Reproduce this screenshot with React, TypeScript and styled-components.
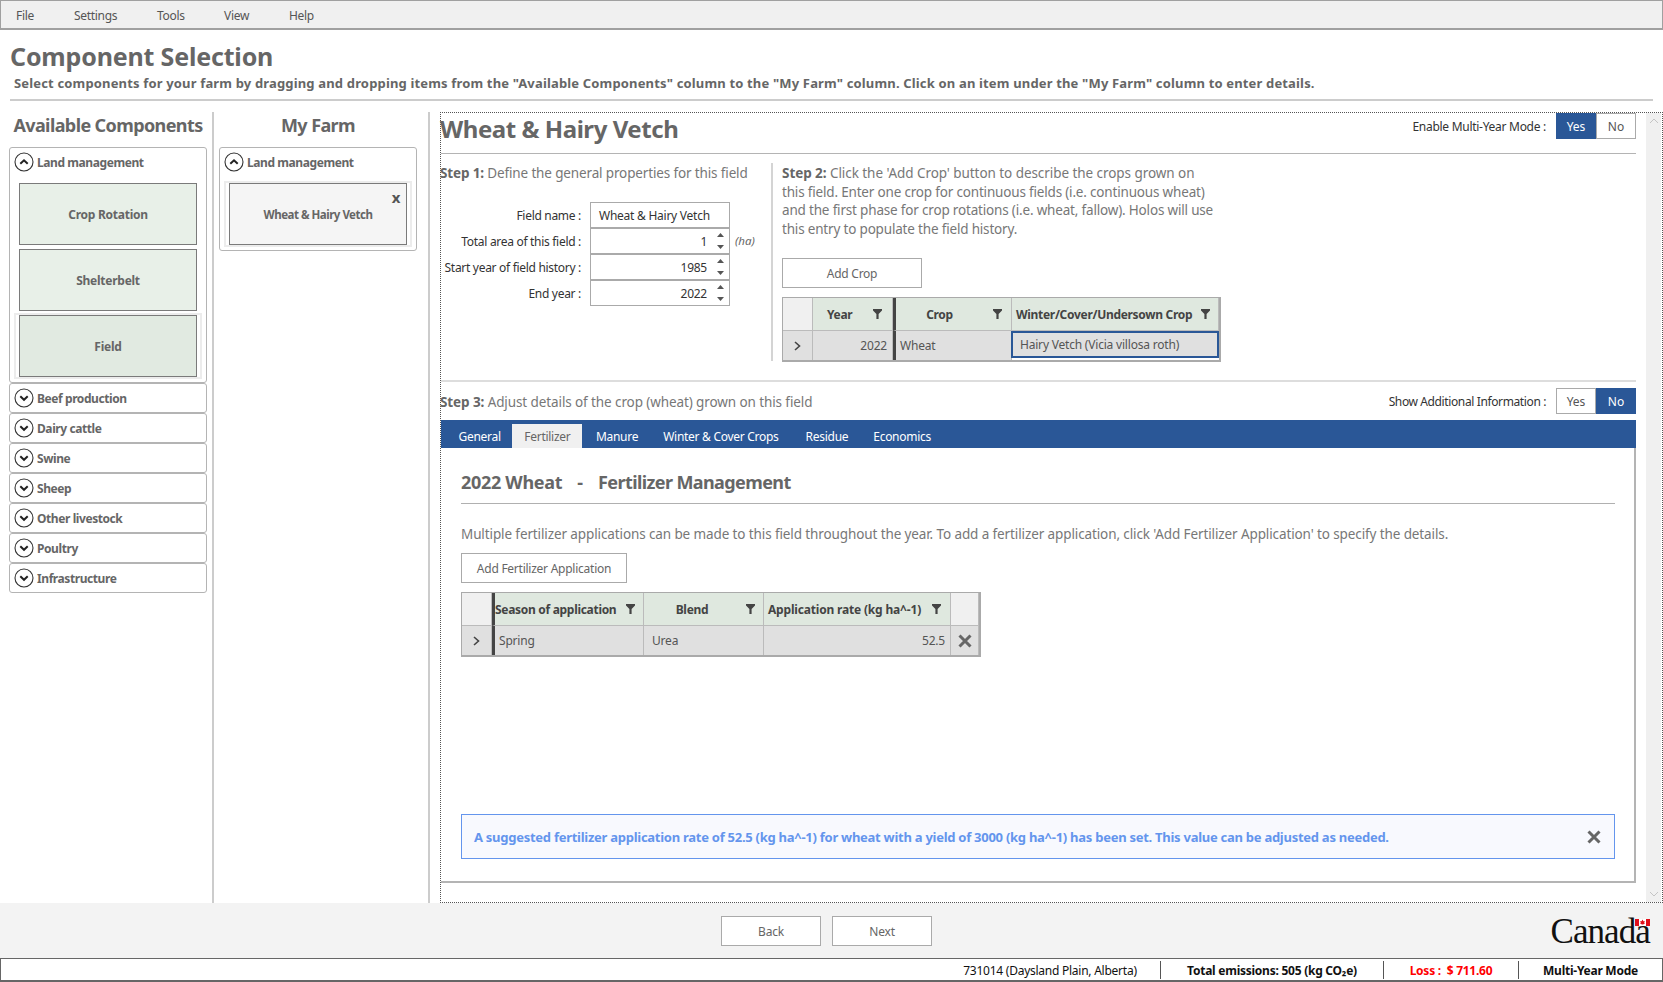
import React from "react";
import styled, { createGlobalStyle } from "styled-components";

const Global = createGlobalStyle`
  html, body { margin: 0; padding: 0; background: #fff; }
  * { box-sizing: border-box; }
  body { font-family: "Noto Sans", "Open Sans", sans-serif; color: #666; overflow: hidden; }
`;

const Page = styled.div`
  width: 1663px; height: 982px; display: flex; flex-direction: column; overflow: hidden;
`;
const MenuBar = styled.div`
  height: 30px; background: #f0f0f0; border: 1px solid #a0a0a0; border-width: 1px 1px 2px 1px; padding-top: 2px;
  display: flex; align-items: center; font-size: 12px; color: #555; position: relative;
`;
const MenuItem = styled.span<{ $w: number }>`
  width: ${(p) => p.$w}px; flex: none; padding-left: 15px; letter-spacing: -0.3px;
`;
const Head = styled.header`
  height: 82px; padding: 9px 10px 0 10px; display: flex; flex-direction: column;
`;
const Title = styled.h1`
  margin: 0 0 1px 0; font-size: 25px; line-height: 34px; font-weight: 700; color: #666; letter-spacing: -0.17px;
`;
const Sub = styled.p`
  margin: 0; padding-left: 4px; font-size: 13px; line-height: 18px; font-weight: 700; color: #666; letter-spacing: 0.16px; white-space: nowrap;
`;
const HeadRule = styled.div`
  height: 2px; margin-top: 7px; width: 1643px; background: #ccc;
`;
const Body = styled.div`
  flex: 1; min-height: 0; display: flex;
`;
const SideCol = styled.aside<{ $w: number; $pl: number }>`
  width: ${(p) => p.$w}px; flex: none; padding-left: ${(p) => p.$pl}px; border-right: 2px solid #ccc;
  display: flex; flex-direction: column;
`;
const ColTitle = styled.h2<{ $w: number }>`
  margin: 0; width: ${(p) => p.$w}px; height: 35px; font-size: 18px; line-height: 26px; font-weight: 700; color: #666;
  text-align: center; letter-spacing: -0.6px; white-space: nowrap;
`;
const Accordion = styled.section`
  width: 198px; border: 1px solid #b4b4b4; border-radius: 3px; background: #fff;
`;
const AccHead = styled.div`
  height: 28px; display: flex; align-items: center; gap: 3px; padding-left: 4px;
  font-size: 12px; font-weight: 700; color: #666; letter-spacing: -0.42px;
`;
const AccBody = styled.div`
  padding: 5px 4px 3px 4px; display: flex; flex-direction: column;
`;
const Ring = styled.div<{ $on?: boolean }>`
  border: 2px solid ${(p) => (p.$on ? "#ececec" : "transparent")}; padding: 0 3px;
  height: 66px; display: flex;
`;
const Tile = styled.div<{ $bg: string; $small?: boolean }>`
  flex: 1; border: 1px solid #7a7a7a; background: ${(p) => p.$bg}; position: relative;
  display: flex; align-items: center; justify-content: center;
  font-size: ${(p) => (p.$small ? 11.5 : 12)}px; font-weight: 700; color: #666; letter-spacing: ${(p) => (p.$small ? -0.5 : -0.25)}px;
`;
const TileClose = styled.span`
  position: absolute; right: 6px; top: 5px; font-size: 15px; line-height: 16px; font-weight: 700; color: #555;
`;
const Main = styled.main`
  flex: none; width: 1223px; margin-left: 10px; border: 1px dotted #555; display: flex;
`;
const Content = styled.div`
  width: 1195px; flex: none; display: flex; flex-direction: column;
`;
const Scroll = styled.div`
  width: 15px; margin-left: 10px; flex: none; background: #f0f0f0; display: flex; flex-direction: column;
  justify-content: space-between; align-items: center; padding: 5px 0; color: #c4c4c4;
`;
const TitleRow = styled.div`
  height: 41px; flex: none; display: flex; justify-content: space-between; border-bottom: 1px solid #b4b4b4;
`;
const FieldTitle = styled.h2`
  margin: 0 0 0 -1px; font-size: 24px; line-height: 31px; font-weight: 700; color: #666; letter-spacing: -0.45px;
`;
const ToggleWrap = styled.div`
  display: flex; align-items: center; height: 26px; font-size: 12px; color: #333;
`;
const ToggleLabel = styled.span<{ $ls: number }>`
  margin-right: 10px; letter-spacing: ${(p) => p.$ls}px;
`;
const ToggleBtn = styled.span<{ $on: boolean }>`
  width: 40px; height: 26px; display: flex; align-items: center; justify-content: center; font-size: 12px;
  background: ${(p) => (p.$on ? "#2a5797" : "#fff")}; color: ${(p) => (p.$on ? "#fff" : "#555")};
  border: 1px solid ${(p) => (p.$on ? "#2a5797" : "#aaa")};
`;
const Steps = styled.div`
  height: 228px; flex: none; display: flex; padding-top: 10px; border-bottom: 2px solid #ddd;
`;
const StepOne = styled.div`
  width: 330px; flex: none;
`;
const StepText = styled.p`
  margin: 0; font-size: 13.5px; line-height: 18.67px; color: #777; letter-spacing: -0.14px; white-space: nowrap;
  b { color: #666; font-weight: 700; }
`;
const StepLead = styled(StepText)`
  margin-left: -1px;
`;
const StepLine = styled.span<{ $ls: number }>`
  display: block; letter-spacing: ${(p) => p.$ls}px;
`;
const Form = styled.div`
  margin-top: 19px; display: grid; grid-template-columns: 140px 140px auto; column-gap: 9px; grid-auto-rows: 26px;
`;
const Label = styled.label`
  align-self: center; text-align: right; font-size: 12px; color: #333; letter-spacing: -0.3px; white-space: nowrap; padding-top: 2px;
`;
const Input = styled.div<{ $num?: boolean }>`
  border: 1px solid #aaa; height: 26px; background: #fff; font-size: 12px; color: #333; letter-spacing: -0.25px;
  display: flex; align-items: center; justify-content: ${(p) => (p.$num ? "flex-end" : "flex-start")};
  padding: 1px ${(p) => (p.$num ? "5px 0 0" : "0 0 8px")}; gap: 9px;
`;
const Unit = styled.span`
  align-self: center; font-size: 11.5px; font-style: italic; color: #666; margin-left: -4px;
`;
const Spin = styled.span`
  display: flex; flex-direction: column; gap: 8px; width: 8px; align-items: center;
`;
const VLine = styled.div`
  width: 2px; height: 198px; flex: none; background: #d4d4d4; margin-top: -1px;
`;
const StepTwo = styled.div`
  flex: none; width: 460px; padding-left: 9px;
`;
const Button = styled.div<{ $w: number }>`
  width: ${(p) => p.$w}px; height: 30px; border: 1px solid #aaa; background: #fff; display: flex; align-items: center;
  justify-content: center; font-size: 12px; color: #666; letter-spacing: -0.25px;
`;
const AddCrop = styled(Button)`
  margin-top: 19.32px;
`;
const Table = styled.div<{ $cols: string; $w: number }>`
  width: ${(p) => p.$w}px; display: grid; grid-template-columns: ${(p) => p.$cols}; grid-template-rows: 33px 29px;
  border: 1px solid #aaa; border-bottom-width: 2px; border-right-width: 2px; font-size: 12px; margin-top: 9px;
`;
const Corner = styled.div`
  background: #f0f0f0; border-right: 1px solid #bbb; border-bottom: 1px solid #bbb;
`;
const RowHead = styled.div`
  background: #e0e0e0; border-right: 1px solid #bbb; display: flex; align-items: center; justify-content: center; color: #444;
`;
const HeadCell = styled.div<{ $bar?: boolean; $pad?: number; $pr?: number }>`
  background: #dfe8df; border-right: 1px solid #bbb; border-bottom: 1px solid #bbb;
  ${(p) => (p.$bar ? "border-left: 3px solid #444;" : "")}
  display: flex; align-items: center; justify-content: space-between; padding: 0 ${(p) => p.$pr ?? 8}px 0 ${(p) => p.$pad ?? 4}px;
  font-weight: 700; color: #444; letter-spacing: -0.3px; white-space: nowrap; font-size: 12px;
`;
const HeadText = styled.span<{ $off?: number; $ls?: number }>`
  ${(p) => (p.$off !== undefined ? `flex: 1; text-align: center; padding-right: ${p.$off}px;` : "")}
  ${(p) => (p.$ls !== undefined ? `letter-spacing: ${p.$ls}px;` : "")}
`;
const Cell = styled.div<{ $bar?: boolean; $right?: boolean; $pad?: number; $sel?: boolean }>`
  background: #e0e0e0; border-right: 1px solid #bbb;
  ${(p) => (p.$bar ? "border-left: 3px solid #444;" : "")}
  ${(p) => (p.$sel ? "border: 2px solid #2a5797; margin: 0 0 2px -1px;" : "")}
  display: flex; align-items: center; justify-content: ${(p) => (p.$right ? "flex-end" : "flex-start")};
  padding: 0 ${(p) => (p.$right ? 5 : 0)}px 0 ${(p) => p.$pad ?? 4}px; color: #555; letter-spacing: -0.2px; white-space: nowrap;
`;
const StepThree = styled.div`
  height: 38px; flex: none; display: flex; justify-content: space-between; align-items: flex-start; padding-top: 6px;
`;
const StepThreeText = styled(StepLead)`
  line-height: 28px; letter-spacing: -0.1px;
`;
const Tabs = styled.nav`
  height: 28px; flex: none; background: #2a5797; display: flex; align-items: flex-end; padding-left: 5px;
`;
const Tab = styled.span<{ $on?: boolean; $ml?: number }>`
  height: 24px; padding: 0 ${(p) => (p.$on ? 12 : 12.5)}px; display: flex; align-items: center; font-size: 12px; letter-spacing: -0.28px;
  margin-left: ${(p) => p.$ml ?? 0}px;
  color: ${(p) => (p.$on ? "#666" : "#fff")}; background: ${(p) => (p.$on ? "#f0f0f0" : "transparent")};
`;
const TabPanel = styled.div`
  height: 435px; flex: none; border: 1px solid #b4b4b4; border-width: 0 2px 2px 0; padding: 0 19px 0 20px;
  display: flex; flex-direction: column; position: relative;
`;
const PanelTitle = styled.h3`
  margin: 0; height: 56px; flex: none; border-bottom: 1px solid #b0b0b0; font-size: 18px; line-height: 69px; font-weight: 700; color: #666;
  display: flex; gap: 15px; white-space: nowrap;
`;
const PanelPart = styled.span<{ $ls: number }>`
  letter-spacing: ${(p) => p.$ls}px;
`;
const Para = styled.p`
  margin: 21px 0 0 0; font-size: 13.5px; line-height: 18px; color: #777; letter-spacing: -0.11px; white-space: nowrap;
`;
const AddFert = styled(Button)`
  margin-top: 10px;
`;
const Alert = styled.div`
  position: absolute; left: 20px; right: 19px; bottom: 22px; height: 45px; border: 1px solid #6495ed; background: #f8f9fe;
  color: #6495ed; font-size: 13px; font-weight: 700; letter-spacing: -0.265px; display: flex; align-items: center;
  justify-content: space-between; padding: 0 13px 0 12px;
`;
const Foot = styled.footer`
  height: 55px; flex: none; background: #f3f3f3; display: flex; justify-content: center; align-items: flex-start;
  padding: 13px 10px 0 0; gap: 11px; position: relative;
`;
const FootBtn = styled.div`
  width: 100px; height: 30px; border: 1px solid #aaa; background: #fff; display: flex; align-items: center; justify-content: center;
  font-size: 12px; color: #666; letter-spacing: -0.2px;
`;
const Wordmark = styled.div`
  position: absolute; right: 13px; top: 10px; font-family: "Liberation Serif", serif; font-size: 35px; line-height: 38px; color: #111;
  letter-spacing: -0.9px;
`;
const Flag = styled.svg`
  position: absolute; right: 0; top: 6px;
`;
const Status = styled.div`
  height: 24px; flex: none; background: #fff; border: 1px solid #666; border-width: 1px 1px 2px 1px; display: flex; align-items: center;
  justify-content: flex-end; font-size: 12px; color: #111; letter-spacing: -0.25px;
`;
const StatusCell = styled.div<{ $w: number; $bold?: boolean; $red?: boolean; $last?: boolean }>`
  width: ${(p) => p.$w}px; flex: none; height: 18px; padding-top: 1px; display: flex; align-items: center; justify-content: center; white-space: nowrap;
  ${(p) => (p.$last ? "" : "border-right: 1px solid #555;")}
  font-weight: ${(p) => (p.$bold ? 700 : 400)}; color: ${(p) => (p.$red ? "#f00" : "#111")};
`;
const Chev = styled.svg`
  flex: none; color: #444;
`;

const CircleChev = ({ up }: { up?: boolean }) => (
  <Chev width="20" height="20" viewBox="0 0 20 20">
    <circle cx="10" cy="10" r="9" fill="#fff" stroke="#333" strokeWidth="1.1" />
    <path d={up ? "M6.3 11.8 L10 8.3 L13.7 11.8" : "M6.3 8.3 L10 11.8 L13.7 8.3"} fill="none" stroke="#222" strokeWidth="2" />
  </Chev>
);
const Funnel = () => (
  <svg width="9" height="10" viewBox="0 0 9 10" style={{ flex: "none" }}>
    <path d="M0 0 H9 V1.6 L5.6 5 V10 H3.4 V5 L0 1.6 Z" fill="#444" />
  </svg>
);
const Up = () => (
  <svg width="7" height="4" viewBox="0 0 7 4"><path d="M3.5 0 L7 4 H0 Z" fill="#555" /></svg>
);
const Down = () => (
  <svg width="7" height="4" viewBox="0 0 7 4"><path d="M0 0 H7 L3.5 4 Z" fill="#555" /></svg>
);
const Spinner = () => (
  <Spin><Up /><Down /></Spin>
);
const Arrow = () => (
  <svg width="7" height="10" viewBox="0 0 7 10"><path d="M1 1 L5.5 5 L1 9" fill="none" stroke="#444" strokeWidth="1.6" /></svg>
);
const Cross = ({ s }: { s: number }) => (
  <svg width={s} height={s} viewBox="0 0 14 14"><path d="M1.5 1.5 L12.5 12.5 M12.5 1.5 L1.5 12.5" stroke="#666" strokeWidth="3" /></svg>
);

const collapsed = ["Beef production", "Dairy cattle", "Swine", "Sheep", "Other livestock", "Poultry", "Infrastructure"];

export default function App() {
  return (
    <Page>
      <Global />
      <MenuBar>
        <MenuItem $w={58}>File</MenuItem>
        <MenuItem $w={83}>Settings</MenuItem>
        <MenuItem $w={67}>Tools</MenuItem>
        <MenuItem $w={65}>View</MenuItem>
        <MenuItem $w={60}>Help</MenuItem>
      </MenuBar>
      <Head>
        <Title>Component Selection</Title>
        <Sub>Select components for your farm by dragging and dropping items from the "Available Components" column to the "My Farm" column. Click on an item under the "My Farm" column to enter details.</Sub>
        <HeadRule />
      </Head>
      <Body>
        <SideCol $w={214} $pl={9}>
          <ColTitle $w={198}>Available Components</ColTitle>
          <Accordion>
            <AccHead><CircleChev up />Land management</AccHead>
            <AccBody>
              <Ring><Tile $bg="#e8f0e8">Crop Rotation</Tile></Ring>
              <Ring><Tile $bg="#e8f0e8">Shelterbelt</Tile></Ring>
              <Ring $on><Tile $bg="#e1eae1">Field</Tile></Ring>
            </AccBody>
          </Accordion>
          {collapsed.map((c) => (
            <Accordion key={c}>
              <AccHead><CircleChev />{c}</AccHead>
            </Accordion>
          ))}
        </SideCol>
        <SideCol $w={216} $pl={5}>
          <ColTitle $w={198}>My Farm</ColTitle>
          <Accordion>
            <AccHead><CircleChev up />Land management</AccHead>
            <AccBody>
              <Ring $on><Tile $bg="#f5f5f5" $small>Wheat &amp; Hairy Vetch<TileClose>x</TileClose></Tile></Ring>
            </AccBody>
          </Accordion>
        </SideCol>
        <Main>
          <Content>
            <TitleRow>
              <FieldTitle>Wheat &amp; Hairy Vetch</FieldTitle>
              <ToggleWrap>
                <ToggleLabel $ls={-0.28}>Enable Multi-Year Mode :</ToggleLabel>
                <ToggleBtn $on>Yes</ToggleBtn>
                <ToggleBtn $on={false}>No</ToggleBtn>
              </ToggleWrap>
            </TitleRow>
            <Steps>
              <StepOne>
                <StepLead><b>Step 1:</b> Define the general properties for this field</StepLead>
                <Form>
                  <Label>Field name :</Label>
                  <Input>Wheat &amp; Hairy Vetch</Input>
                  <span />
                  <Label>Total area of this field :</Label>
                  <Input $num>1<Spinner /></Input>
                  <Unit>(ha)</Unit>
                  <Label>Start year of field history :</Label>
                  <Input $num>1985<Spinner /></Input>
                  <span />
                  <Label>End year :</Label>
                  <Input $num>2022<Spinner /></Input>
                  <span />
                </Form>
              </StepOne>
              <VLine />
              <StepTwo>
                <StepText>
                  <StepLine $ls={-0.06}><b>Step 2:</b> Click the 'Add Crop' button to describe the crops grown on</StepLine>
                  <StepLine $ls={-0.18}>this field. Enter one crop for continuous fields (i.e. continuous wheat)</StepLine>
                  <StepLine $ls={-0.18}>and the first phase for crop rotations (i.e. wheat, fallow). Holos will use</StepLine>
                  <StepLine $ls={-0.18}>this entry to populate the field history.</StepLine>
                </StepText>
                <AddCrop $w={140}>Add Crop</AddCrop>
                <Table $w={439} $cols="30px 80px 119px 1fr">
                  <Corner />
                  <HeadCell $pad={14} $pr={10}><HeadText>Year</HeadText><Funnel /></HeadCell>
                  <HeadCell $bar $pr={9}><HeadText $off={14}>Crop</HeadText><Funnel /></HeadCell>
                  <HeadCell><HeadText>Winter/Cover/Undersown Crop</HeadText><Funnel /></HeadCell>
                  <RowHead><Arrow /></RowHead>
                  <Cell $right>2022</Cell>
                  <Cell $bar>Wheat</Cell>
                  <Cell $sel $pad={7}>Hairy Vetch (Vicia villosa roth)</Cell>
                </Table>
              </StepTwo>
            </Steps>
            <StepThree>
              <StepThreeText><b>Step 3:</b> Adjust details of the crop (wheat) grown on this field</StepThreeText>
              <ToggleWrap>
                <ToggleLabel $ls={-0.38}>Show Additional Information :</ToggleLabel>
                <ToggleBtn $on={false}>Yes</ToggleBtn>
                <ToggleBtn $on>No</ToggleBtn>
              </ToggleWrap>
            </StepThree>
            <Tabs>
              <Tab>General</Tab>
              <Tab $on $ml={-1}>Fertilizer</Tab>
              <Tab $ml={1}>Manure</Tab>
              <Tab>Winter &amp; Cover Crops</Tab>
              <Tab $ml={2}>Residue</Tab>
              <Tab>Economics</Tab>
            </Tabs>
            <TabPanel>
              <PanelTitle>
                <PanelPart $ls={-0.3}>2022 Wheat</PanelPart>
                <PanelPart $ls={0}>-</PanelPart>
                <PanelPart $ls={-0.6}>Fertilizer Management</PanelPart>
              </PanelTitle>
              <Para>Multiple fertilizer applications can be made to this field throughout the year. To add a fertilizer application, click 'Add Fertilizer Application' to specify the details.</Para>
              <AddFert $w={166}>Add Fertilizer Application</AddFert>
              <Table $w={520} $cols="30px 152px 120px 187px 1fr">
                <Corner />
                <HeadCell $bar $pad={0}><HeadText>Season of application</HeadText><Funnel /></HeadCell>
                <HeadCell><HeadText $off={10}>Blend</HeadText><Funnel /></HeadCell>
                <HeadCell $pr={9}><HeadText $ls={-0.18}>Application rate (kg ha^-1)</HeadText><Funnel /></HeadCell>
                <Corner />
                <RowHead><Arrow /></RowHead>
                <Cell $bar $pad={4}>Spring</Cell>
                <Cell $pad={8}>Urea</Cell>
                <Cell $right>52.5</Cell>
                <RowHead><Cross s={14} /></RowHead>
              </Table>
              <Alert>
                A suggested fertilizer application rate of 52.5 (kg ha^-1) for wheat with a yield of 3000 (kg ha^-1) has been set. This value can be adjusted as needed.
                <Cross s={14} />
              </Alert>
            </TabPanel>
          </Content>
          <Scroll>
            <svg width="10" height="6" viewBox="0 0 10 6"><path d="M1 5 L5 1 L9 5" fill="none" stroke="currentColor" /></svg>
            <svg width="10" height="6" viewBox="0 0 10 6"><path d="M1 1 L5 5 L9 1" fill="none" stroke="currentColor" /></svg>
          </Scroll>
        </Main>
      </Body>
      <Foot>
        <FootBtn>Back</FootBtn>
        <FootBtn>Next</FootBtn>
        <Wordmark>
          Canada
          <Flag width="15" height="7" viewBox="0 0 15 7">
            <rect width="15" height="7" fill="#e0101a" />
            <rect x="4" width="7" height="7" fill="#fff" />
            <path d="M7.5 0.5 L8.4 2.2 L9.8 2 L9.2 4 L10 4.6 L8 5.6 H7 L5 4.6 L5.8 4 L5.2 2 L6.6 2.2 Z" fill="#e0101a" />
          </Flag>
        </Wordmark>
      </Foot>
      <Status>
        <StatusCell $w={221}>731014 (Daysland Plain, Alberta)</StatusCell>
        <StatusCell $w={223} $bold>Total emissions: 505 (kg CO₂e)</StatusCell>
        <StatusCell $w={135} $bold $red>Loss :&nbsp; $ 711.60</StatusCell>
        <StatusCell $w={143} $bold $last>Multi-Year Mode</StatusCell>
      </Status>
    </Page>
  );
}
